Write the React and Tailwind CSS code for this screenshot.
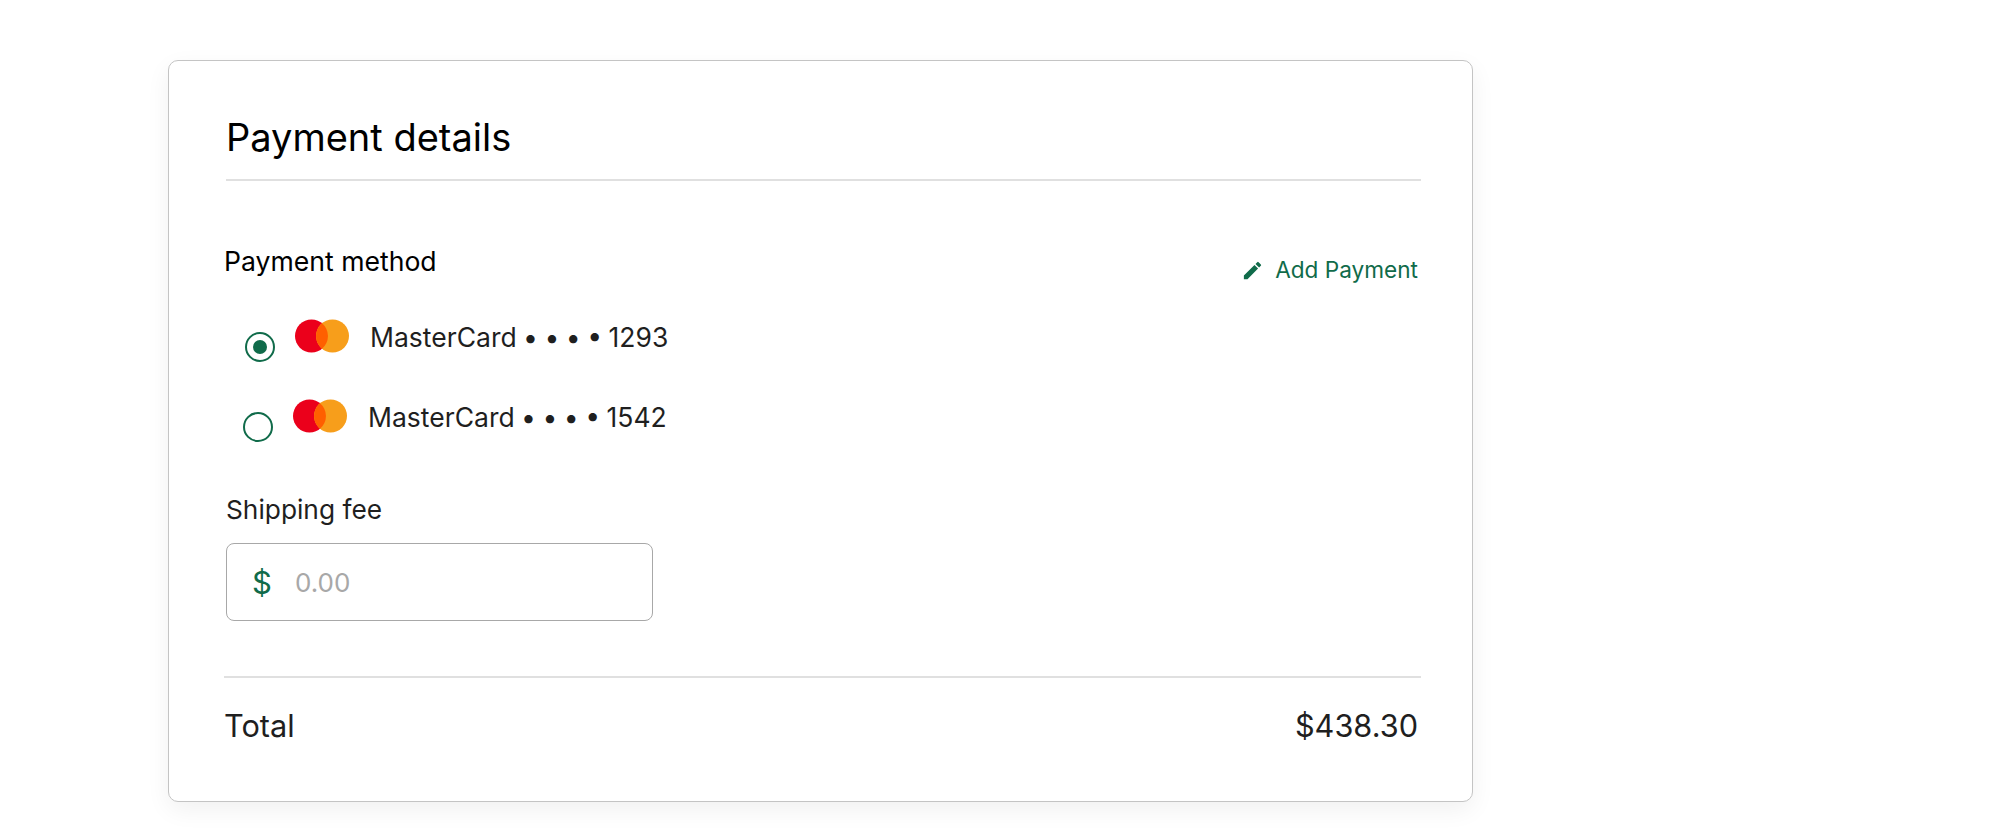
import React from "react";
import { MdEdit } from "react-icons/md";

// mastercard mark, two overlapping circles
function MasterCardLogo() {
  return (
    <svg width="54" height="34" viewBox="0 0 54 34" className="shrink-0">
      <circle cx="16.5" cy="17" r="16.5" fill="#EB001B" />
      <circle cx="37.5" cy="17" r="16.5" fill="#F79E1B" />
      <path d="M27 4.3a16.5 16.5 0 0 1 0 25.4a16.5 16.5 0 0 1 0-25.4z" fill="#FF5F00" />
    </svg>
  );
}

function Radio({ checked }) {
  return (
    <div className="w-[30px] h-[30px] shrink-0 rounded-full border-2 border-[#106b4a] flex items-center justify-center">
      {checked && <div className="w-[14px] h-[14px] rounded-full bg-[#106b4a]" />}
    </div>
  );
}

function PaymentRow({ checked, last4, className }) {
  return (
    <div className={"flex items-start " + className}>
      <div className="mt-[13px]">
        <Radio checked={checked} />
      </div>
      <div className="ml-[20px]">
        <MasterCardLogo />
      </div>
      <span className="ml-[21px] mt-[2px] text-[26.5px] leading-[32px] [word-spacing:-1px] text-[#1f1f1f] whitespace-nowrap">
        MasterCard • • • • {last4}
      </span>
    </div>
  );
}

export default function App() {
  return (
    <div className="min-h-[835px] bg-white pl-[168px] pt-[60px] overflow-hidden font-['Inter',sans-serif]">
      <div className="w-[1305px] h-[742px] bg-white border border-[#c4c4c4] rounded-[10px] shadow-[0_8px_24px_rgba(0,0,0,0.06)] pl-[57px] pr-[51px] pt-[54px]">
        {/* Header */}
        <h1 className="text-[38px] leading-[44px] text-black pb-[20px] border-b-2 border-[#e0e0e0]">
          Payment details
        </h1>

        {/* Payment method */}
        <div className="flex justify-between items-start mt-[64px]">
          <h2 className="text-[26.6px] leading-[32px] text-black -ml-[2px]">Payment method</h2>
          <button className="flex items-center gap-[11px] mt-[11px] mb-[1px] mr-[3px] text-[22.6px] leading-[28px] text-[#106b4a]">
            <MdEdit className="w-[23px] h-[23px]" />
            Add Payment
          </button>
        </div>

        <PaymentRow checked last4="1293" className="mt-[34px] ml-[19px]" />
        <PaymentRow last4="1542" className="mt-[37px] ml-[17px]" />

        {/* Shipping fee */}
        <label className="block mt-[52px] text-[26.3px] leading-[32px] text-[#1f1f1f]">Shipping fee</label>
        <div className="mt-[17px] w-[427px] h-[78px] flex items-center border border-[#a8a8a8] rounded-[8px] pl-[25px] pt-[2px]">
          <span className="w-[43px] text-[31px] leading-[36px] text-[#106b4a]">$</span>
          <span className="text-[26px] leading-[32px] text-[#a8a8a8]">0.00</span>
        </div>

        <div className="mt-[55px] -ml-[2px] h-[2px] bg-[#e0e0e0]" />

        {/* Total */}
        <div className="flex justify-between mt-[30px] pr-[3px] text-[30.7px] leading-[36px] text-[#1f1f1f]">
          <span className="-ml-[2px]">Total</span>
          <span>$438.30</span>
        </div>
      </div>
    </div>
  );
}
